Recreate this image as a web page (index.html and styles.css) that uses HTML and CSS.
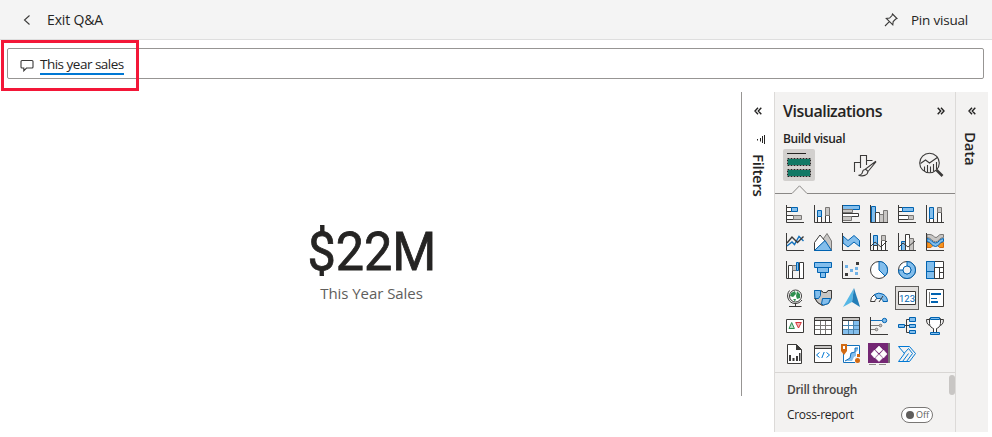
FILE: index.html
```html
<!DOCTYPE html>
<html lang="en">
<head>
<meta charset="utf-8">
<title>Q&amp;A</title>
<link rel="stylesheet" href="styles.css">
</head>
<body>
<header class="topbar">
  <div class="exit">
    <svg width="8" height="12" viewBox="0 0 8 12" class="ln"><path d="M6.500 1.500L1.500 6l5 4.500"/></svg>
    <span class="t-exit">Exit Q&amp;A</span>
  </div>
  <div class="pin">
    <svg width="14" height="14" viewBox="0 0 14 14" class="ln"><path d="M8.500 1L13 5.500l-1.300.5-2.500 2.500-.4 3.300L2.300 5.500l3.300-.4L8 2.500zM5.300 8.700L1 13"/></svg>
    <span class="t-pin">Pin visual</span>
  </div>
</header>
<div class="search">
  <svg width="14" height="13" viewBox="0 0 14 13" class="ln talk"><path d="M2 1.500H12Q13 1.500 13 2.500V8Q13 9 12 9H6.500L3.800 11.800V9H2Q1 9 1 8V2.500Q1 1.500 2 1.500Z"/></svg>
  <span class="query">This year sales</span>
  <div class="callout"></div>
</div>
<main class="main">
  <section class="canvas">
    <div class="value">$22M</div>
    <div class="label">This Year Sales</div>
  </section>
  <aside class="filters">
    <svg width="8" height="8" viewBox="0 0 8 8" class="chev"><path d="M4 .7L1 4l3 3.300M7.300.7l-3 3.300 3 3.300"/></svg>
    <svg width="9" height="9" viewBox="0 0 9 9" class="funnel"><path d="M7.500 0V9M5.500 1V8M3.500 3V6.500M.5 4V5.500"/></svg>
    <span class="side t-filters">Filters</span>
  </aside>
  <aside class="viz">
    <div class="viz-head"><span class="t-viz">Visualizations</span>
      <svg width="8" height="8" viewBox="0 0 8 8" class="chev"><path d="M.7.7l3 3.300-3 3.300M4 .7L7 4 4 7.300"/></svg>
    </div>
    <div class="build"><span class="t-build">Build visual</span></div>
    <div class="tabs">
      <div class="tab on"><svg width="32" height="32" viewBox="0 0 32 32"><path d="M4 4.500H23" stroke="#252423"/><path d="M4.500 9.500h23v7h-23zM4.500 20.500h23v7h-23z" fill="#117865" stroke="#f3f2f1"/><path d="M4.500 9.500h23v7h-23zM4.500 20.500h23v7h-23z" stroke="#252423" stroke-dasharray="2 1"/></svg></div>
      <div class="tab"><svg width="24" height="24" viewBox="0 0 24 24" class="ln"><path d="M1.500 19V9.500H7M7.500 15V2.500h6V12M13.500 7.500h6"/><path d="M22.500 8.500L12.500 16l2.500 2.500L22.800 9zM12.500 16.500c-2 0-2.800 1-3 2.500-.2 1.500-1.700 3-4 3.200 4.500 1.500 9 .2 9.500-3.700" fill="#f3f2f1"/></svg></div>
      <div class="tab"><svg width="26" height="26" viewBox="0 0 26 26" class="ln"><circle cx="11.500" cy="11" r="9.800"/><path d="M2.500 11.500L7.500 8l4 3L20 5M6.500 19v-4.500M9.500 20.500V13M12.500 20.500v-6M15.500 19.500V12M18.500 17V10"/><path d="M18.500 18l6 6" stroke-width="2.600"/></svg></div>
    </div>
    <svg class="notch" width="180" height="9" viewBox="0 0 180 9"><path d="M0 8.500H17L24.500.8 32 8.500H180"/></svg>
    <div class="grid">
      <div class="cell"><svg viewBox="0 0 20 20"><path class="w" d="M1.500 3.500h5v4h-5zM1.500 11.500h7v4h-7z"/><path class="b" d="M6.500 3.500h6v4h-6z"/><path class="g" d="M8.500 11.500h8v4h-8z"/><path class="n" d="M1.500 1V18.500H19"/></svg></div>
      <div class="cell"><svg viewBox="0 0 20 20"><path class="w" d="M4.500 12.500h4v6h-4zM12.500 11.500h4v7h-4z"/><path class="b" d="M4.500 6.500h4v6h-4z"/><path class="g" d="M12.500 3.500h4v8h-4z"/><path class="n" d="M1.500 1V18.500H19"/></svg></div>
      <div class="cell"><svg viewBox="0 0 20 20"><path class="b" d="M1.500 1.500h17v4h-17z"/><path class="g" d="M1.500 5.500h10v3h-10z"/><path class="w" d="M1.500 9.500h16v3h-16z"/><path class="g" d="M1.500 12.500h9v4h-9z"/><path class="n" d="M1.500 1V18.500H19"/></svg></div>
      <div class="cell"><svg viewBox="0 0 20 20"><path class="b" d="M2.500 2.500h4v16h-4z"/><path class="w" d="M6.500 8.500h4v10h-4z"/><path class="g" d="M10.500 10.500h4v8h-4zM14.500 6.500h4v12h-4z"/><path class="n" d="M1.500 1V18.500H19"/></svg></div>
      <div class="cell"><svg viewBox="0 0 20 20"><path class="w" d="M1.500 3.500h4v4h-4zM1.500 11.500h10v4h-10z"/><path class="b" d="M5.500 3.500h11v4h-11z"/><path class="g" d="M11.500 11.500h5v4h-5z"/><path class="n" d="M1.500 1V18.500H19"/></svg></div>
      <div class="cell"><svg viewBox="0 0 20 20"><path class="w" d="M4.500 14.500h4v4h-4zM12.500 8.500h4v10h-4z"/><path class="b" d="M4.500 3.500h4v11h-4z"/><path class="g" d="M12.500 3.500h4v5h-4z"/><path class="n" d="M1.500 1V18.500H19"/></svg></div>

      <div class="cell"><svg viewBox="0 0 20 20"><path class="n bl thick" d="M2 14l5-4 2.500 2.500L14 4.500l4.500 4.500"/><path class="n thick" d="M2 11l5-6 5.500 5.500 6-6"/><path class="n" d="M1.500 1V18.500H19"/></svg></div>
      <div class="cell"><svg viewBox="0 0 20 20"><path class="g" d="M9.500 8L14 1.500 18.500 9v9.500z"/><path class="w" d="M1.500 10.500L7 3l5 6-10.500 9.500z"/><path class="b" d="M1.500 18.500L12 8.500l6.500 10z"/></svg></div>
      <div class="cell"><svg viewBox="0 0 20 20"><path class="b" d="M2 4l5 4.500 6-5 5.500 5v6L13 10l-6 5-5-4z"/><path class="n" d="M1.500 1V18.500H19"/></svg></div>
      <div class="cell"><svg viewBox="0 0 20 20"><path class="b" d="M4.500 3.500h4v11h-4z"/><path class="w" d="M4.500 13.500h4v5h-4zM12.500 8.500h4v10h-4z"/><path class="g" d="M12.500 3.500h4v5h-4z"/><path class="n" d="M1.500 1V18.500H19M2 14l4-4 6 5 6-6"/></svg></div>
      <div class="cell"><svg viewBox="0 0 20 20"><path class="b" d="M4.500 9.500h4v9h-4z"/><path class="w" d="M8.500 2.500h4v16h-4z"/><path class="g" d="M12.500 6.500h4v12h-4z"/><path class="n" d="M1.500 1V18.500H19M2 15l4-4 5 4 7-6"/></svg></div>
      <div class="cell"><svg viewBox="0 0 20 20"><path class="o" d="M2 10.500h3l5 2 4-2h4.500v5h-4l-2-2H8l-2 2H2z"/><path class="g" d="M2 2.500h3c3 0 4 3 6 3s2-3 5-3h2.500v3c-4 0-5 4.500-8 4.500S6 5.500 2 5.500z"/><path class="b" d="M2 6.500c4 0 5 4.500 8.500 4.500s4-4.500 8-4.500v3c-4 0-4 5-8 5S6 9.500 2 9.500z"/><path class="n" d="M1.500 1V18.500H19"/></svg></div>

      <div class="cell"><svg viewBox="0 0 20 20"><path class="w" d="M3.500 5.500h4v13h-4zM14.500 2.500h4v16h-4z"/><path class="g" d="M7.500 5.500h4v5h-4z"/><path class="b" d="M11.500 2.500h2v8h-2z"/><path class="n" d="M1.500 1V18.500H19"/></svg></div>
      <div class="cell"><svg viewBox="0 0 20 20"><path class="b" d="M1.500 2.500h17v5h-17zM4.500 7.500h11v5h-11zM7.500 12.500h5v5h-5z"/></svg></div>
      <div class="cell"><svg viewBox="0 0 20 20"><path d="M15 2h3v3h-3zM4 13h3v3H4zM4 2h0z" fill="#3b3a39"/><path d="M4 5h3v3H4zM9 9h3v3H9zM14 7h3v3h-3zM14 12h3v3h-3z" fill="#6fb1e6"/><path class="n" d="M1.500 1V18.500H19"/></svg></div>
      <div class="cell"><svg viewBox="0 0 20 20"><circle class="w" cx="10" cy="10" r="8.500"/><path class="b" d="M10 10V1.500A8.500 8.500 0 0 1 16 16z"/></svg></div>
      <div class="cell"><svg viewBox="0 0 20 20"><circle class="w" cx="10" cy="10" r="8.500"/><path class="b" d="M10 1.500A8.500 8.500 0 1 1 1.500 10H6a4 4 0 1 0 4-4z"/><circle class="p" cx="10" cy="10" r="4"/></svg></div>
      <div class="cell"><svg viewBox="0 0 20 20"><path class="w" d="M1.500 1.500h17v17h-17z"/><path class="b" d="M1.500 1.500h8v10h-8zM1.500 11.500h8v7h-8z"/><path class="n" d="M9.500 7.500h9M14.500 7.500v11M9.500 7.500v11M14.500 12.500h4"/></svg></div>

      <div class="cell"><svg viewBox="0 0 20 20"><circle class="w" cx="10.500" cy="8" r="6"/><path d="M6 5l4-2 1 3-3 3-3-1zM12 3l3 3v4l-3 1-1-3zM8 11l3 0-1 2.500z" fill="#2f8f50"/><path class="n" d="M4.500 2.500C0 8 4 15.500 10 15.500c3 0 5-1 7-3.500M10.500 15.500v3M4 18.500h12.500"/></svg></div>
      <div class="cell"><svg viewBox="0 0 20 20"><path class="g" d="M1.500 2.500h6l3 2h3l1.500-2h3.500v8l-3 5-6 2-5-3-3-6z"/><path class="b" d="M1.500 2.500h6v5l-2 3H2zM9.500 10.500h8l-2 5-5 1.500-2-1z"/><path class="n" d="M1.500 10l3 4.500 5 3M8 2.500l2.500 2h3l1.500-2h3.500v8"/></svg></div>
      <div class="cell"><svg viewBox="0 0 20 20"><path d="M13 0L2 19l9-5z" fill="#55b7e6"/><path d="M13 0l6 19-8-5z" fill="#237eb8"/></svg></div>
      <div class="cell"><svg viewBox="0 0 20 20"><path class="w" d="M1.500 13.500a8.500 8.500 0 0 1 4-7l2.500 4c-1.500.7-2 1.500-2 3z"/><path class="b" d="M5.500 6.500a8.500 8.500 0 0 1 13 7H14c0-1.500-1-2.500-2.500-3H8z"/><path class="n" d="M10 14l4-6"/></svg></div>
      <div class="cell sel"><svg viewBox="0 0 20 20"><path class="w" d="M1.500 3.500h17v13h-17z"/><text x="10" y="13.500" class="num">123</text></svg></div>
      <div class="cell"><svg viewBox="0 0 20 20"><path class="w" d="M1.500 1.500h17v17h-17z"/><path d="M4.500 4V15.500" stroke="#797775"/><path d="M6 6h10M6 14h7" stroke="#0063b1" stroke-width="2"/><path d="M6 10.500h6" stroke="#0063b1"/></svg></div>

      <div class="cell"><svg viewBox="0 0 20 20"><path class="w" d="M1.500 3.500h17v13h-17z"/><path d="M4 12.500l2.700-6 2.700 6z" fill="#b8e0c8" stroke="#2f8f50"/><path d="M10.700 6.500h5.600l-2.800 5.500z" fill="#f6b5b5" stroke="#d13438"/></svg></div>
      <div class="cell"><svg viewBox="0 0 20 20"><path class="w" d="M1.500 1.500h17v17h-17z"/><path d="M2 2h16v2H2z" fill="#c8c6c4"/><path class="n" d="M1.500 4.500h17"/><path d="M7.500 5v13M12.500 5v13M2 9.500h16M2 13.500h16" stroke="#797775"/></svg></div>
      <div class="cell"><svg viewBox="0 0 20 20"><path class="w" d="M1.500 1.500h17v17h-17z"/><path d="M2 2h16v2H2z" fill="#c8c6c4"/><path d="M13 5h5v13H2v-4h11z" fill="#83beec"/><path d="M7.500 5v13M12.500 5v13M2 9.500h16M2 13.500h16" stroke="#4a84ae"/><path class="n" d="M1.500 4.500h17M1.500 1.500h17v17h-17z"/></svg></div>
      <div class="cell"><svg viewBox="0 0 20 20"><path class="n" d="M1.500 1V18.500H19"/><path class="n bl" d="M2 4.500h11"/><path d="M2 9.500h8M2 13.500h5" stroke="#797775"/><circle class="b" cx="15.500" cy="4.500" r="2.200"/><circle class="g" cx="11.500" cy="9.500" r="1.300"/><circle class="g" cx="7.500" cy="13.500" r="1.300"/></svg></div>
      <div class="cell"><svg viewBox="0 0 20 20"><path class="n" d="M7 9.500h5M12 3.500h-2.500v13H12"/><path class="b" d="M1.500 8.500h6v3h-6zM12.500 1.500h6v4h-6zM12.500 8.500h6v3h-6zM12.500 14.500h6v3h-6z"/></svg></div>
      <div class="cell"><svg viewBox="0 0 20 20"><path class="n" d="M5 3.500H1.500c0 4 1.500 6 5 6.500M15 3.500h3.500c0 4-1.500 6-5 6.500"/><path class="w" d="M4.500 2.500h11v5c0 3-2.500 4.500-4 5v4h-3v-4c-1.500-.5-4-2-4-5z"/><path class="b" d="M5.500 1.500h9v2h-9zM5.500 16.500h9v2h-9z"/></svg></div>

      <div class="cell"><svg viewBox="0 0 20 20"><path class="w" d="M2.500.5h9l5 5v14h-14z"/><path d="M11 0l6 6h-6z" fill="#3b3a39"/><path d="M4 11h2v6H4zM7.500 14h2v3h-2zM11 12h2v5h-2zM14 9h1.500v8H14z" fill="#3b3a39"/></svg></div>
      <div class="cell"><svg viewBox="0 0 20 20"><path class="w" d="M1.500 1.500h17v17h-17z"/><path d="M2 2h16v2H2z" fill="#c8c6c4"/><path class="n" d="M1.500 4.500h17"/><path class="n bl2" d="M6.500 8.500l-3 2.500 3 2.500M13.500 8.500l3 2.500-3 2.500M11.200 8l-2.400 6"/></svg></div>
      <div class="cell"><svg viewBox="0 0 20 20"><path d="M2.500 1.500h16v17h-16z" fill="#fff" class="frame"/><path d="M17 4h-3v4l-4 1-1 5-5 3h7l2-4 2-1V8l2-2z" fill="#83beec"/><path class="frame" d="M17 4h-3v4l-4 1-1 5-5 3"/><path d="M0 0h6v7l-3 4-3-4z" fill="#d26a12"/><path d="M14 13h5v6h-5z" fill="#f3f2f1"/><circle cx="16.500" cy="16.500" r="2.500" fill="#d26a12"/><path d="M16 10h3v3h-3z" fill="#d26a12"/><path d="M2 2h2v3H2z" fill="#fff"/></svg></div>
      <div class="cell"><svg viewBox="0 0 22 22" class="app"><path d="M0 0h20v20H0z" fill="#742774"/><path d="M20 0h2v20h-2z" fill="#797775"/><path d="M1 21.500h7M11 21.500h7" stroke="#8a8886"/><path d="M11 3l3.500 3.500L11 10 7.500 6.500zM6.500 7l3.500 4-3.500 4L3 11zM15.500 7l3.500 4-3.500 4-3.500-4zM11 11.500l3.500 3.500-3.500 3.500L7.500 15z" fill="#fff" stroke="#fff" stroke-width=".6" stroke-linejoin="round"/></svg></div>
      <div class="cell"><svg viewBox="0 0 20 20"><path d="M1.500 2.500h11l6 7-6 8h-11l6-8zM7 9.500l4.500-5 4 5-6 8M11.500 9.500l-6 8" class="n bl2"/></svg></div>
    </div>
    <div class="drill">
      <div class="drill-title"><span class="t-drill">Drill through</span></div>
      <div class="cross"><span class="t-cross">Cross-report</span><div class="toggle"><i></i><span class="t-off">Off</span></div></div>
      <div class="thumb"></div>
    </div>
  </aside>
  <aside class="data">
    <svg width="8" height="8" viewBox="0 0 8 8" class="chev"><path d="M4 .7L1 4l3 3.300M7.300.7l-3 3.300 3 3.300"/></svg>
    <span class="side t-data">Data</span>
  </aside>
</main>
</body>
</html>
```
FILE: styles.css
```css
* { box-sizing: border-box; }
body { margin: 0; width: 992px; height: 437px; overflow: hidden; background: #fff; color: #252423; font-family: "Open Sans", "Noto Sans", sans-serif; font-size: 13px; line-height: 18px; }
svg { display: block; fill: none; flex: none; }
span { white-space: nowrap; }
.ln { stroke: #3b3a39; stroke-width: 1.1; }
.topbar { height: 40px; background: #f4f4f4; border-bottom: 1px solid #dedede; display: flex; justify-content: space-between; align-items: center; padding: 0 24px 0 23px; }
.exit { display: flex; align-items: center; gap: 16px; font-size: 14px; letter-spacing: -.15px; }
.pin { display: flex; align-items: center; gap: 13px; font-size: 13.500px; letter-spacing: -.2px; }
.search { position: relative; height: 31px; margin: 8px 8px 0 7px; border: 1px solid #979593; border-radius: 2px; display: flex; align-items: center; gap: 6px; padding-left: 12px; }
.talk { margin-top: 3px; }
.query { border-bottom: 2px solid #0078d4; height: 20px; line-height: 18px; margin-top: 2px; font-size: 13.500px; letter-spacing: -.5px; width: 84px; }
.callout { position: absolute; left: -7px; top: -9px; width: 138px; height: 51px; border: 3px solid #f31738; }
.main { display: flex; height: 340px; margin-top: 13px; }
.canvas { width: 741px; display: flex; flex-direction: column; align-items: center; padding: 132px 0 0 2px; }
.value { font: 400 53px/56px Roboto, sans-serif; transform: scaleX(.95); -webkit-text-stroke: .8px #252423; }
.label { font-size: 15px; line-height: 20px; color: #605e5c; margin-top: 3px; letter-spacing: -.05px; }
.filters { width: 33px; height: 304px; border-left: 1px solid #979593; display: flex; flex-direction: column; align-items: center; padding-top: 15px; }
.chev { stroke: #252423; stroke-width: 1.4; }
.funnel { stroke: #252423; margin: 20px 0 0 6px; }
.side { writing-mode: vertical-rl; font-weight: 600; font-size: 15px; line-height: 20px; }
.t-filters { margin: 10px -1px 0 0; letter-spacing: -.3px; }
.viz { width: 182px; background: #f3f2f1; border: solid #dcdad8; border-width: 0 1px; }
.viz-head { display: flex; justify-content: space-between; align-items: center; height: 38px; padding: 0 10px 0 8px; font-weight: 600; font-size: 16px; letter-spacing: -.5px; }
.build { padding-left: 8px; height: 19px; line-height: 17px; font-weight: 600; font-size: 12px; letter-spacing: -.35px; }
.tabs { display: flex; justify-content: space-between; padding: 0 8px; height: 36px; }
.tab { width: 32px; height: 32px; display: flex; align-items: center; justify-content: center; border-radius: 2px; }
.tab.on { background: #d2d0ce; }
.notch { stroke: #8a8886; }
.grid { display: grid; grid-template-columns: repeat(6, 28px); grid-auto-rows: 28px; padding: 6px; height: 178px; }
.cell { display: flex; align-items: center; justify-content: center; }
.cell svg { width: 20px; height: 20px; }
.cell .app { width: 22px; height: 22px; }
.sel { width: 24px; height: 24px; margin: 2px; background: #e1dfdd; outline: 1px solid #605e5c; outline-offset: -1px; }
.w { fill: #fff; stroke: #3b3a39; }
.b { fill: #83beec; stroke: #0063b1; }
.g { fill: #c8c6c4; stroke: #797775; }
.o { fill: #f7941e; stroke: #d26a12; }
.p { fill: #f3f2f1; stroke: #0063b1; }
.n { stroke: #3b3a39; }
.bl, .frame { stroke: #1271bd; }
.bl2 { stroke: #0078d4; }
.thick { stroke-width: 1.4; }
.num { font: 400 9.500px Roboto, sans-serif; fill: #0063b1; text-anchor: middle; }
.drill { position: relative; border-top: 1px solid #d8d6d4; height: 60px; padding: 8px 22px 0 12px; }
.drill-title { color: #484644; font-weight: 600; font-size: 12px; height: 23px; letter-spacing: -.3px; }
.cross { display: flex; justify-content: space-between; align-items: center; height: 22px; font-size: 12px; letter-spacing: -.3px; }
.toggle { width: 32px; height: 16px; border: 1px solid #797775; border-radius: 8px; background: #fff; display: flex; align-items: center; gap: 2px; padding-left: 4px; font-size: 9px; color: #605e5c; letter-spacing: 0; }
.toggle i { width: 8px; height: 8px; border-radius: 50%; background: #605e5c; }
.thumb { position: absolute; right: 0; top: 2px; width: 6px; height: 20px; border-radius: 3px; background: #c8c6c4; }
.data { width: 32px; background: #f3f2f1; display: flex; flex-direction: column; align-items: center; padding-top: 15px; }
.t-data { margin: 17px 2px 0 0; letter-spacing: -.2px; }
```
